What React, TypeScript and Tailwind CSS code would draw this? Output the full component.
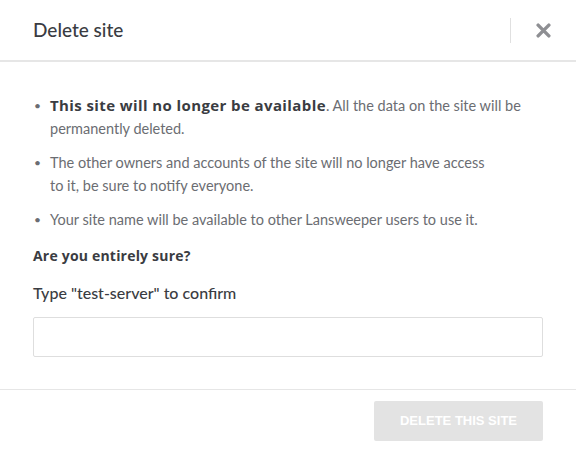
const bodyFont = { fontFamily: "Lato, 'Noto Sans', sans-serif" };
const boldFont = { fontFamily: "'Open Sans', 'Noto Sans', sans-serif" };

export default function App() {
  return (
    <div className="h-[450px] w-[576px] bg-white text-[#3d3f45]" style={bodyFont}>
      <header className="flex h-[62px] items-center border-b-2 border-[#e6e6e6] pl-[33px] pr-[23px]">
        <h2 className="flex-1 text-[19px] font-medium text-[#3a3c42]">Delete site</h2>
        <div className="h-[25px] w-px bg-[#e0e0e0]" />
        <button type="button" className="ml-[22px] flex h-5 w-5 items-center justify-center" aria-label="Close">
          <svg width="15" height="15" viewBox="0 0 14 14">
            <path d="M2 2L12 12M12 2L2 12" stroke="#8e8f93" strokeWidth="3.2" strokeLinecap="round" />
          </svg>
        </button>
      </header>

      <div className="px-[33px] pt-[32px]">
        <ul className="flex flex-col gap-[11px] text-[14.5px] leading-[23px] text-[#6b6d72]">
          <li className="flex">
            <span className="w-[17px] shrink-0 pl-[1px] text-[12px]">•</span>
            <span className="whitespace-nowrap">
              <b className="text-[15px] font-bold tracking-[0.4px] text-[#3a3c42]" style={boldFont}>
                This site will no longer be available
              </b>
              . All the data on the site will be
              <br />
              permanently deleted.
            </span>
          </li>
          <li className="flex">
            <span className="w-[17px] shrink-0 pl-[1px] text-[12px]">•</span>
            <span className="whitespace-nowrap">
              The other owners and accounts of the site will no longer have access
              <br />
              to it, be sure to notify everyone.
            </span>
          </li>
          <li className="flex">
            <span className="w-[17px] shrink-0 pl-[1px] text-[12px]">•</span>
            <span>Your site name will be available to other Lansweeper users to use it.</span>
          </li>
        </ul>
        <p className="mt-[13px] text-[14px] font-bold leading-[23px] tracking-[0.2px] text-[#3a3c42]" style={boldFont}>
          Are you entirely sure?
        </p>
        <label className="mt-[14px] block text-[16px] font-medium leading-[24px] text-[#3a3c42]">
          Type "test-server" to confirm
        </label>
        <input className="mt-[12px] block h-[40px] w-full rounded-[2px] border border-[#dedede] outline-none" />
      </div>

      <footer className="mt-[32px] flex justify-end border-t border-[#e6e6e6] px-[33px] pt-[11px]">
        <button
          type="button"
          className="h-[40px] w-[169px] rounded-[2px] bg-[#e3e3e3] text-[13px] font-bold text-white"
          style={{ fontFamily: "'Liberation Sans', Arial, sans-serif" }}
        >
          DELETE THIS SITE
        </button>
      </footer>
    </div>
  );
}
